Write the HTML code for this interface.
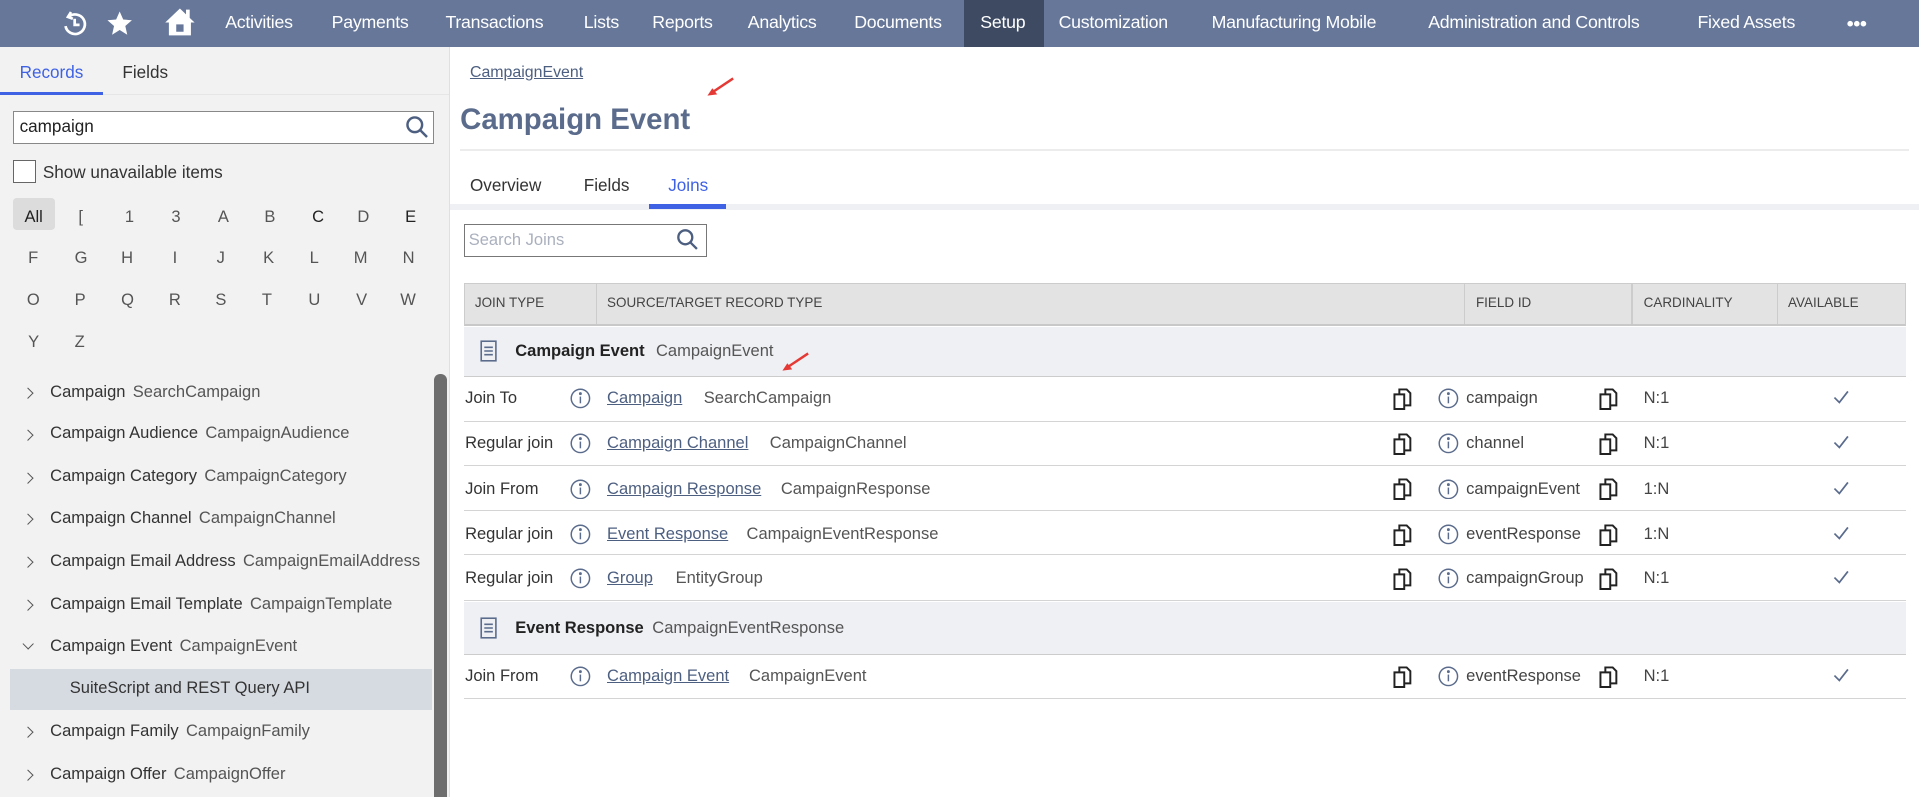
<!DOCTYPE html>
<html><head><meta charset="utf-8"><style>
html,body{margin:0;padding:0;background:#fff;overflow:hidden;width:1919px;height:797px}
#w{zoom:1.22385;width:1568px;height:651px;position:relative;font-family:"Liberation Sans",sans-serif;color:#333;font-size:13.5px;overflow:hidden}
.a{position:absolute;white-space:nowrap}
.nav{position:absolute;left:0;top:0;width:1568px;height:38px;background:#66779a}
.nav .a{color:#fff;font-size:14.5px;top:10px;letter-spacing:-0.2px}
.left{position:absolute;left:0;top:38px;width:367px;height:613px;background:#f2f2f2}
.tr .c{position:absolute;left:22px;width:6px;height:6px;border-right:1.6px solid #555;border-bottom:1.6px solid #555;transform:rotate(-45deg)}
.tr .m{color:#333}.tr .t{color:#555;margin-left:6px}
.row{position:absolute;left:379px;width:1178px;border-bottom:1.5px solid #d4d4d4}
.lnk{color:#4d5f80;text-decoration:underline}
.g{color:#555}
.hd{position:absolute;top:231px;height:33px;font-size:11px;color:#444;line-height:33px}
</style></head><body><div id="w">
<div class="nav">
<svg class="a" style="left:49px;top:7px" width="24" height="24" viewBox="0 0 24 24" fill="none" stroke="#fff" stroke-width="2.2"><path d="M7 6.5A8 8 0 1 1 4.5 14"/><path d="M9 2.5L6.5 6.5 10.5 8"/><path d="M12 8v5h4"/></svg>
<svg class="a" style="left:86px;top:7px" width="24" height="24" viewBox="0 0 24 24"><path fill="#fff" d="M12 2l2.9 6.6 7.1.6-5.4 4.7 1.6 7.1L12 17.2 5.8 21l1.6-7.1L2 9.2l7.1-.6z"/></svg>
<svg class="a" style="left:134px;top:5px" width="26" height="26" viewBox="0 0 26 26"><path fill="#fff" d="M13 2L1 13.5h3V24h18V13.5h3L21 9.7V3h-3v3.8zM10 15h6v6h-6z" fill-rule="evenodd"/></svg>
<span class="a" style="left:184px">Activities</span>
<span class="a" style="left:271px">Payments</span>
<span class="a" style="left:364px">Transactions</span>
<span class="a" style="left:477px">Lists</span>
<span class="a" style="left:533px">Reports</span>
<span class="a" style="left:611px">Analytics</span>
<span class="a" style="left:698px">Documents</span>
<div class="a" style="left:788px;top:0;width:65px;height:38px;background:#3d4a62"></div>
<span class="a" style="left:801px">Setup</span>
<span class="a" style="left:865px">Customization</span>
<span class="a" style="left:990px">Manufacturing Mobile</span>
<span class="a" style="left:1167px">Administration and Controls</span>
<span class="a" style="left:1387px">Fixed Assets</span>
<span class="a" style="left:1509px;top:11px !important;font-size:16px;font-weight:bold">•••</span>
</div>
<div class="left">
<span class="a" style="left:16px;top:13px;color:#3f62e4;font-size:14px">Records</span>
<span class="a" style="left:100px;top:13px;color:#333;font-size:14px">Fields</span>
<div class="a" style="left:0;top:37px;width:84px;height:3px;background:#3f62e4"></div>
<div class="a" style="left:84px;top:39px;width:283px;height:1px;background:#e6e6e6"></div>
<div class="a" style="left:11px;top:53px;width:342px;height:25px;border:1px solid #888;background:#fff"></div>
<span class="a" style="left:16px;top:57px;font-size:14px;color:#222">campaign</span>
<svg class="a" style="left:331px;top:56px" width="20" height="20" viewBox="0 0 20 20" fill="none" stroke="#4d5f80" stroke-width="2"><circle cx="8" cy="8" r="6"/><path d="M12.5 12.5L18 18"/></svg>
<div class="a" style="left:11px;top:93px;width:17px;height:17px;border:1px solid #666;background:#fff"></div>
<span class="a" style="left:35px;top:94px;font-size:14px;color:#333">Show unavailable items</span>
<div class="a" style="left:11px;top:124px;width:34px;height:26px;background:#dcdcdc;border-radius:3px"></div>
<div style="position:absolute;left:0;top:131px;font-size:13.5px;color:#555">
<span class="a" style="left:20px;top:0;color:#222">All</span><span class="a" style="left:64px;top:0">[</span><span class="a" style="left:102px;top:0">1</span><span class="a" style="left:140px;top:0">3</span><span class="a" style="left:178px;top:0">A</span><span class="a" style="left:216px;top:0">B</span><span class="a" style="left:255px;top:0;color:#222">C</span><span class="a" style="left:292px;top:0">D</span><span class="a" style="left:331px;top:0;color:#222">E</span>
<span class="a" style="left:23px;top:34px">F</span><span class="a" style="left:61px;top:34px">G</span><span class="a" style="left:99px;top:34px">H</span><span class="a" style="left:141px;top:34px">I</span><span class="a" style="left:177px;top:34px">J</span><span class="a" style="left:215px;top:34px">K</span><span class="a" style="left:253px;top:34px">L</span><span class="a" style="left:289px;top:34px">M</span><span class="a" style="left:329px;top:34px">N</span>
<span class="a" style="left:22px;top:68px">O</span><span class="a" style="left:61px;top:68px">P</span><span class="a" style="left:99px;top:68px">Q</span><span class="a" style="left:138px;top:68px">R</span><span class="a" style="left:176px;top:68px">S</span><span class="a" style="left:214px;top:68px">T</span><span class="a" style="left:252px;top:68px">U</span><span class="a" style="left:291px;top:68px">V</span><span class="a" style="left:327px;top:68px">W</span>
<span class="a" style="left:23px;top:102px">Y</span><span class="a" style="left:61px;top:102px">Z</span>
</div>
<div class="a" style="left:355px;top:268px;width:10px;height:360px;background:#6e6e6e;border-radius:5px"></div>
<div class="a" style="left:8px;top:509px;width:345px;height:33px;background:#d6dbe2"></div>
<div class="tr" style="position:absolute;left:0;top:0;font-size:13.5px">
<div class="a" style="top:274px"><i class="c" style="top:6px;left:20px"></i><span class="a" style="left:41px"><span class="m">Campaign</span><span class="t">SearchCampaign</span></span></div>
<div class="a" style="top:308px"><i class="c" style="top:6px;left:20px"></i><span class="a" style="left:41px"><span class="m">Campaign Audience</span><span class="t">CampaignAudience</span></span></div>
<div class="a" style="top:343px"><i class="c" style="top:6px;left:20px"></i><span class="a" style="left:41px"><span class="m">Campaign Category</span><span class="t">CampaignCategory</span></span></div>
<div class="a" style="top:377px"><i class="c" style="top:6px;left:20px"></i><span class="a" style="left:41px"><span class="m">Campaign Channel</span><span class="t">CampaignChannel</span></span></div>
<div class="a" style="top:412px"><i class="c" style="top:6px;left:20px"></i><span class="a" style="left:41px"><span class="m">Campaign Email Address</span><span class="t">CampaignEmailAddress</span></span></div>
<div class="a" style="top:447px"><i class="c" style="top:6px;left:20px"></i><span class="a" style="left:41px"><span class="m">Campaign Email Template</span><span class="t">CampaignTemplate</span></span></div>
<div class="a" style="top:482px"><i class="c" style="top:3px;left:20px;transform:rotate(45deg)"></i><span class="a" style="left:41px"><span class="m">Campaign Event</span><span class="t">CampaignEvent</span></span></div>
<span class="a" style="left:57px;top:516px;color:#333">SuiteScript and REST Query API</span>
<div class="a" style="top:551px"><i class="c" style="top:6px;left:20px"></i><span class="a" style="left:41px"><span class="m">Campaign Family</span><span class="t">CampaignFamily</span></span></div>
<div class="a" style="top:586px"><i class="c" style="top:6px;left:20px"></i><span class="a" style="left:41px"><span class="m">Campaign Offer</span><span class="t">CampaignOffer</span></span></div>
</div>
</div>
<div class="a" style="left:367px;top:38px;width:1px;height:613px;background:#e0e0e0"></div>
<span class="a lnk" style="left:384px;top:52px;font-size:13px">CampaignEvent</span>
<svg class="a" style="left:576px;top:62px" width="26" height="18"><path d="M23 2L5 14" stroke="#e53935" stroke-width="2"/><path d="M2 16l8-1-4-5z" fill="#e53935"/></svg>
<span class="a" style="left:376px;top:84px;font-size:24px;font-weight:bold;color:#5a6b8c">Campaign Event</span>
<div class="a" style="left:376px;top:122px;width:1184px;height:1px;background:#ececec"></div>
<span class="a" style="left:384px;top:143px;font-size:14px;color:#333">Overview</span>
<span class="a" style="left:477px;top:143px;font-size:14px;color:#333">Fields</span>
<span class="a" style="left:546px;top:143px;font-size:14px;color:#3f62e4">Joins</span>
<div class="a" style="left:368px;top:167px;width:1200px;height:5px;background:#eef0f3"></div>
<div class="a" style="left:530px;top:167px;width:63px;height:4px;background:#3f62e4"></div>
<div class="a" style="left:379px;top:183px;width:197px;height:25px;border:1px solid #777"></div>
<span class="a" style="left:383px;top:188px;font-size:13.5px;color:#aab0bd">Search Joins</span>
<svg class="a" style="left:552px;top:186px" width="19" height="19" viewBox="0 0 20 20" fill="none" stroke="#4d5f80" stroke-width="2"><circle cx="8" cy="8" r="6"/><path d="M12.5 12.5L18 18"/></svg>
<div class="a" style="left:379px;top:231px;width:1177px;height:33px;background:#e3e3e3;border:1px solid #ccc;border-bottom:2px solid #c8c8c8"></div>
<div class="a" style="left:487px;top:232px;width:1px;height:33px;background:#ccc"></div>
<div class="a" style="left:1196px;top:232px;width:1px;height:33px;background:#ccc"></div>
<div class="a" style="left:1333px;top:232px;width:1px;height:33px;background:#ccc"></div>
<div class="a" style="left:1452px;top:232px;width:1px;height:33px;background:#ccc"></div>
<span class="hd" style="left:388px">JOIN TYPE</span>
<span class="hd" style="left:496px">SOURCE/TARGET RECORD TYPE</span>
<span class="hd" style="left:1206px">FIELD ID</span>
<span class="hd" style="left:1343px">CARDINALITY</span>
<span class="hd" style="left:1461px">AVAILABLE</span>
<div class="a" style="left:379px;top:267px;width:1178px;height:40px;background:#eff0f4;border-bottom:1.5px solid #ccc"></div>
<div class="a" style="left:379px;top:492px;width:1178px;height:42px;background:#eff0f4;border-bottom:1.5px solid #ccc"></div>
<svg class="a" style="left:392px;top:278px" width="14" height="18" viewBox="0 0 14 18" fill="none" stroke="#5a6b8c" stroke-width="1.3"><rect x="1" y="1" width="12" height="16"/><path d="M3.5 6h7M3.5 9h7M3.5 12h7"/></svg>
<span class="a" style="left:421px;top:279px;font-weight:bold;color:#222">Campaign Event</span><span class="a g" style="left:536px;top:279px">CampaignEvent</span>
<svg class="a" style="left:637px;top:287px" width="26" height="18"><path d="M23 2L5 14" stroke="#e53935" stroke-width="2"/><path d="M2 16l8-1-4-5z" fill="#e53935"/></svg>
<svg class="a" style="left:392px;top:504px" width="14" height="18" viewBox="0 0 14 18" fill="none" stroke="#5a6b8c" stroke-width="1.3"><rect x="1" y="1" width="12" height="16"/><path d="M3.5 6h7M3.5 9h7M3.5 12h7"/></svg>
<span class="a" style="left:421px;top:505px;font-weight:bold;color:#222">Event Response</span><span class="a g" style="left:533px;top:505px">CampaignEventResponse</span>
<div class="row" style="top:307px;height:37px"></div>
<div class="row" style="top:344px;height:36px"></div>
<div class="row" style="top:381px;height:36px"></div>
<div class="row" style="top:418px;height:35px"></div>
<div class="row" style="top:454px;height:36px"></div>
<div class="row" style="top:535px;height:35px"></div>
<div id="rows"></div>
<script>
var R=[[326,"Join To","Campaign",575,"SearchCampaign","campaign","N:1"],[363,"Regular join","Campaign Channel",629,"CampaignChannel","channel","N:1"],[400,"Join From","Campaign Response",638,"CampaignResponse","campaignEvent","1:N"],[437,"Regular join","Event Response",610,"CampaignEventResponse","eventResponse","1:N"],[473,"Regular join","Group",552,"EntityGroup","campaignGroup","N:1"],[553,"Join From","Campaign Event",612,"CampaignEvent","eventResponse","N:1"]];
var info='<svg width="17" height="17" viewBox="0 0 17 17" fill="none" stroke="#5a6b8c" stroke-width="1.2"><circle cx="8.5" cy="8.5" r="7.5"/><path d="M8.5 7v5.5"/><circle cx="8.5" cy="4.6" r=".6" fill="#5a6b8c"/></svg>';
var copy='<svg width="18" height="19" viewBox="0 0 18 19" fill="none" stroke="#222" stroke-width="1.6"><path d="M2 6h8v12H2z"/><path d="M6 6V2h6l3 3v10h-5"/></svg>';
var h='';R.forEach(function(r){var y=r[0]-9;
h+='<span class="a" style="left:380px;top:'+y+'px">'+r[1]+'</span>';
h+='<span class="a" style="left:466px;top:'+(y)+'px">'+info+'</span>';
h+='<span class="a lnk" style="left:496px;top:'+y+'px">'+r[2]+'</span>';
h+='<span class="a g" style="left:'+r[3]+'px;top:'+y+'px">'+r[4]+'</span>';
h+='<span class="a" style="left:1137px;top:'+(y-1)+'px">'+copy+'</span>';
h+='<span class="a" style="left:1175px;top:'+y+'px">'+info+'</span>';
h+='<span class="a" style="left:1198px;top:'+y+'px;color:#444">'+r[5]+'</span>';
h+='<span class="a" style="left:1306px;top:'+(y-1)+'px">'+copy+'</span>';
h+='<span class="a" style="left:1343px;top:'+y+'px;color:#444">'+r[6]+'</span>';
h+='<svg class="a" style="left:1497px;top:'+(y+1)+'px" width="14" height="14"><path d="M2 7l4 4 7-9" fill="none" stroke="#5a6b8c" stroke-width="1.4"/></svg>';
});document.getElementById('rows').innerHTML=h;
</script>
</div></body></html>
